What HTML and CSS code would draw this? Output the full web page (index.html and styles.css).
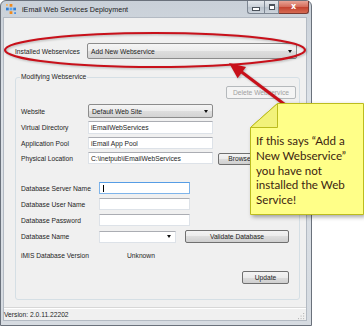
FILE: index.html
```html
<!DOCTYPE html>
<html lang="en">
<head>
  <meta charset="UTF-8">
  <title>iEmail Web Services Deployment</title>
  <link rel="stylesheet" href="styles.css">
</head>
<body>
  <div class="screen">
    <div class="window">
      <div class="titlebar">
        <svg class="app-icon" viewBox="0 0 11 11">
          <rect x="4" y="0" width="3" height="3" fill="#f08a1c"/>
          <rect x="0" y="4" width="3" height="3" fill="#2f7fd6"/>
          <rect x="4" y="4" width="3" height="3" fill="#5aa6ee"/>
          <rect x="8" y="4" width="3" height="3" fill="#2f7fd6"/>
          <rect x="4" y="8" width="3" height="3" fill="#f08a1c"/>
          <rect x="0" y="0" width="2" height="2" fill="#f7b25a"/>
          <rect x="9" y="9" width="2" height="2" fill="#4a90e2"/>
        </svg>
        <span class="title">iEmail Web Services Deployment</span>
        <div class="caption-buttons">
          <span class="cap cap-min"><span class="glyph-min"></span></span>
          <span class="cap cap-max"><span class="glyph-max"></span></span>
          <span class="cap cap-close">x</span>
        </div>
      </div>

      <div class="client">
        <div class="installed-row">
          <span class="label installed-label">Installed Webservices</span>
          <div class="combo combo-wide">Add New Webservice<span class="arrow"></span></div>
        </div>

        <fieldset class="group">
          <legend>Modifying Webservice</legend>

          <div class="delete-row">
            <button class="btn-delete" disabled>Delete Webservice</button>
          </div>

          <div class="site-grid">
            <span class="label">Website</span>
            <div class="combo">Default Web Site<span class="arrow"></span></div>
            <span></span>

            <span class="label">Virtual Directory</span>
            <div class="textbox">iEmailWebServices</div>
            <span></span>

            <span class="label">Application Pool</span>
            <div class="textbox">iEmail App Pool</div>
            <span></span>

            <span class="label">Physical Location</span>
            <div class="textbox">C:\inetpub\iEmailWebServices</div>
            <button class="btn-browse">Browse</button>
          </div>

          <div class="db-grid">
            <span class="label">Database Server Name</span>
            <div class="textbox textbox-db focused"><span class="caret"></span></div>

            <span class="label">Database User Name</span>
            <div class="textbox textbox-db"></div>

            <span class="label">Database Password</span>
            <div class="textbox textbox-db"></div>

            <span class="label">Database Name</span>
            <div class="name-cell">
              <div class="dropdown"><span class="arrow"></span></div>
              <button class="btn-validate">Validate Database</button>
            </div>
          </div>

          <div class="version-row">
            <span class="label version-label">iMIS Database Version</span>
            <span>Unknown</span>
          </div>

          <div class="update-row">
            <button class="btn-update">Update</button>
          </div>
        </fieldset>

        <div class="statusbar">
          Version: 2.0.11.22202
          <svg class="grip" viewBox="0 0 8 8">
            <rect x="6" y="0" width="1" height="1" fill="#9a9a9a"/>
            <rect x="3" y="3" width="1" height="1" fill="#9a9a9a"/>
            <rect x="6" y="3" width="1" height="1" fill="#9a9a9a"/>
            <rect x="0" y="6" width="1" height="1" fill="#9a9a9a"/>
            <rect x="3" y="6" width="1" height="1" fill="#9a9a9a"/>
            <rect x="6" y="6" width="1" height="1" fill="#9a9a9a"/>
          </svg>
        </div>
      </div>
    </div>

    <!-- red markup drawn over the screenshot -->
    <svg class="markup" viewBox="0 0 364 328">
      <ellipse cx="155" cy="50" rx="150" ry="17" fill="none" stroke="#c8101a" stroke-width="2.2"/>
      <line x1="292" y1="110" x2="239" y2="70" stroke="#c8101a" stroke-width="3"/>
      <polygon points="229,63 246,67 237.6,78.2" fill="#c8101a"/>
    </svg>

    <div class="callout">
      <svg class="callout-shape" viewBox="0 0 114 112">
        <polygon points="27.5,0.5 113.5,0.5 113.5,111.5 0.5,111.5 0.5,24.5" fill="#ffff88" stroke="#bcbc1e"/>
        <polygon points="0.5,24.5 27.5,0.5 27.5,24.5" fill="#f2f27a" stroke="#bcbc1e"/>
      </svg>
      <p class="callout-text">If this says “Add a<br>New Webservice”<br>you have not<br>installed the Web<br>Service!</p>
    </div>
  </div>
</body>
</html>
```

FILE: styles.css
```css
body {
  margin: 0;
  background: #fff;
  font-family: "Liberation Sans", Arial, sans-serif;
  font-size: 6.7px;
  color: #1e1e1e;
}
.screen {
  position: relative;
  width: 364px;
  height: 328px;
  overflow: hidden;
}
.window {
  width: 312px;
  height: 326px;
  box-sizing: border-box;
  border: 1px solid #6a717b;
  border-radius: 6px 6px 0 0;
  background: linear-gradient(#c9d0d8, #dde2e8 30%, #d6dbe1);
  padding: 0 5px 5px 3px;
  display: flex;
  flex-direction: column;
}
.titlebar {
  height: 17px;
  display: flex;
  align-items: flex-start;
  margin-right: -3px;
}
.app-icon {
  width: 10px;
  height: 10px;
  margin: 3px 0 0 2px;
}
.title {
  margin: 5px 0 0 6px;
  font-size: 7.2px;
  line-height: 8px;
  color: #1a1a1a;
}
.caption-buttons {
  margin-left: auto;
  display: flex;
}
.cap {
  height: 13px;
  box-sizing: border-box;
  border: 1px solid #7d8692;
  border-top: none;
  display: flex;
  align-items: center;
  justify-content: center;
}
.cap-min {
  width: 17px;
  border-radius: 0 0 0 3px;
  border-right: none;
  background: linear-gradient(#e4e8ed, #c9d0d8 50%, #b7c0ca 50%, #cdd4dc);
}
.cap-max {
  width: 15px;
  background: linear-gradient(#e4e8ed, #c9d0d8 50%, #b7c0ca 50%, #cdd4dc);
}
.cap-close {
  width: 30px;
  border-color: #7a3a32;
  border-left: none;
  border-radius: 0 0 3px 0;
  background: linear-gradient(#e8a496, #d46a58 50%, #c2412e 50%, #d66a52);
  color: #fff;
  font-family: "DejaVu Sans", sans-serif;
  font-weight: bold;
  font-size: 8px;
  line-height: 8px;
}
.glyph-min {
  width: 6px;
  height: 2px;
  margin-top: 4px;
  background: #fff;
  border: 1px solid #4b525b;
}
.glyph-max {
  width: 4px;
  height: 3px;
  border: 1px solid #4b525b;
  border-top-width: 2px;
  background: #fff;
}
.client {
  flex: 1;
  background: #f0f0f0;
  box-shadow: 0 0 0 1px #b3bac3;
  display: flex;
  flex-direction: column;
}
.label {
  white-space: nowrap;
}
.installed-row {
  display: flex;
  align-items: center;
  height: 16px;
  margin: 25px 0 0 11px;
}
.installed-label {
  width: 72px;
}
.combo {
  box-sizing: border-box;
  height: 100%;
  border: 1px solid #8c8c8c;
  border-radius: 2px;
  background: linear-gradient(#f5f5f5, #ececec 50%, #dedede 50%, #d3d3d3);
  display: flex;
  align-items: center;
  padding-left: 3px;
}
.combo-wide {
  width: 210px;
  height: 16px;
}
.arrow {
  width: 0;
  height: 0;
  margin-left: auto;
  margin-right: 4px;
  border-left: 2.5px solid transparent;
  border-right: 2.5px solid transparent;
  border-top: 3px solid #111;
}
.group {
  margin: 14px 0 0 11px;
  width: 285px;
  box-sizing: border-box;
  min-width: 0;
  border: 1px solid #d5dfe5;
  border-radius: 3px;
  padding: 0 0 15px;
}
.group legend {
  margin-left: 4px;
  padding: 0 1px;
  line-height: 8px;
  font-size: 6.7px;
}
.delete-row {
  display: flex;
  justify-content: flex-end;
  margin-top: 5px;
  padding-right: 3px;
}
button {
  font: inherit;
  color: #1e1e1e;
  box-sizing: border-box;
  height: 13px;
  padding: 0;
  border: 1px solid #707070;
  border-radius: 2px;
  background: linear-gradient(#f3f3f3, #ebebeb 50%, #dddddd 50%, #cfcfcf);
}
button:disabled {
  border-color: #b5b9bc;
  background: #f4f4f4;
  color: #a0a0a0;
}
.btn-delete {
  width: 70px;
}
.site-grid {
  display: grid;
  grid-template-columns: 62px 125px 43px;
  grid-template-rows: 14px 13px 12px 12px;
  column-gap: 5px;
  row-gap: 3px;
  align-items: center;
  margin: 5px 0 0 5px;
}
.textbox {
  box-sizing: border-box;
  height: 100%;
  border: 1px solid #dde2e8;
  border-top-color: #abadb3;
  background: #fff;
  padding-left: 2px;
  display: flex;
  align-items: center;
  white-space: nowrap;
  overflow: hidden;
}
.btn-browse {
  width: 43px;
  height: 12px;
  margin-top: 1px;
}
.db-grid {
  display: grid;
  grid-template-columns: 78px auto;
  grid-template-rows: 12px 12px 12px 13px;
  row-gap: 4px;
  align-items: center;
  justify-items: start;
  margin: 18px 0 0 5px;
}
.textbox-db {
  width: 91px;
}
.focused {
  border-color: #7eb4ea;
  border-top-color: #569de5;
}
.caret {
  width: 1px;
  height: 7px;
  background: #000;
  margin-left: 1px;
}
.name-cell {
  display: flex;
  align-items: center;
  gap: 9px;
  height: 13px;
}
.dropdown {
  box-sizing: border-box;
  width: 77px;
  height: 12px;
  border: 1px solid #dde2e8;
  border-top-color: #abadb3;
  background: #fff;
  display: flex;
  align-items: center;
}
.btn-validate {
  width: 104px;
}
.version-row {
  display: flex;
  align-items: center;
  height: 10px;
  margin: 7px 0 0 5px;
}
.version-label {
  width: 106px;
}
.update-row {
  display: flex;
  justify-content: flex-end;
  margin-top: 11px;
  padding-right: 10px;
}
.btn-update {
  width: 47px;
}
.statusbar {
  margin-top: auto;
  height: 12px;
  border-top: 1px solid #d7d7d7;
  box-shadow: inset 0 1px #fff;
  display: flex;
  align-items: center;
  padding-left: 0;
}
.grip {
  width: 7px;
  height: 7px;
  margin: 4px 1px 0 auto;
}
.markup {
  position: absolute;
  left: 0;
  top: 0;
  width: 364px;
  height: 328px;
  pointer-events: none;
  filter: drop-shadow(1px 1px 1px rgba(0, 0, 0, 0.25));
}
.callout {
  position: absolute;
  left: 250px;
  top: 103px;
  width: 114px;
  height: 112px;
}
.callout-shape {
  position: absolute;
  left: 0;
  top: 0;
  width: 114px;
  height: 112px;
  filter: drop-shadow(2px 2px 2px rgba(0, 0, 0, 0.35));
}
.callout-text {
  position: relative;
  margin: 0;
  padding: 31px 0 0 6px;
  font-family: Lato, "Open Sans", sans-serif;
  font-size: 11.6px;
  line-height: 14.8px;
  color: #3c1e10;
}
```
